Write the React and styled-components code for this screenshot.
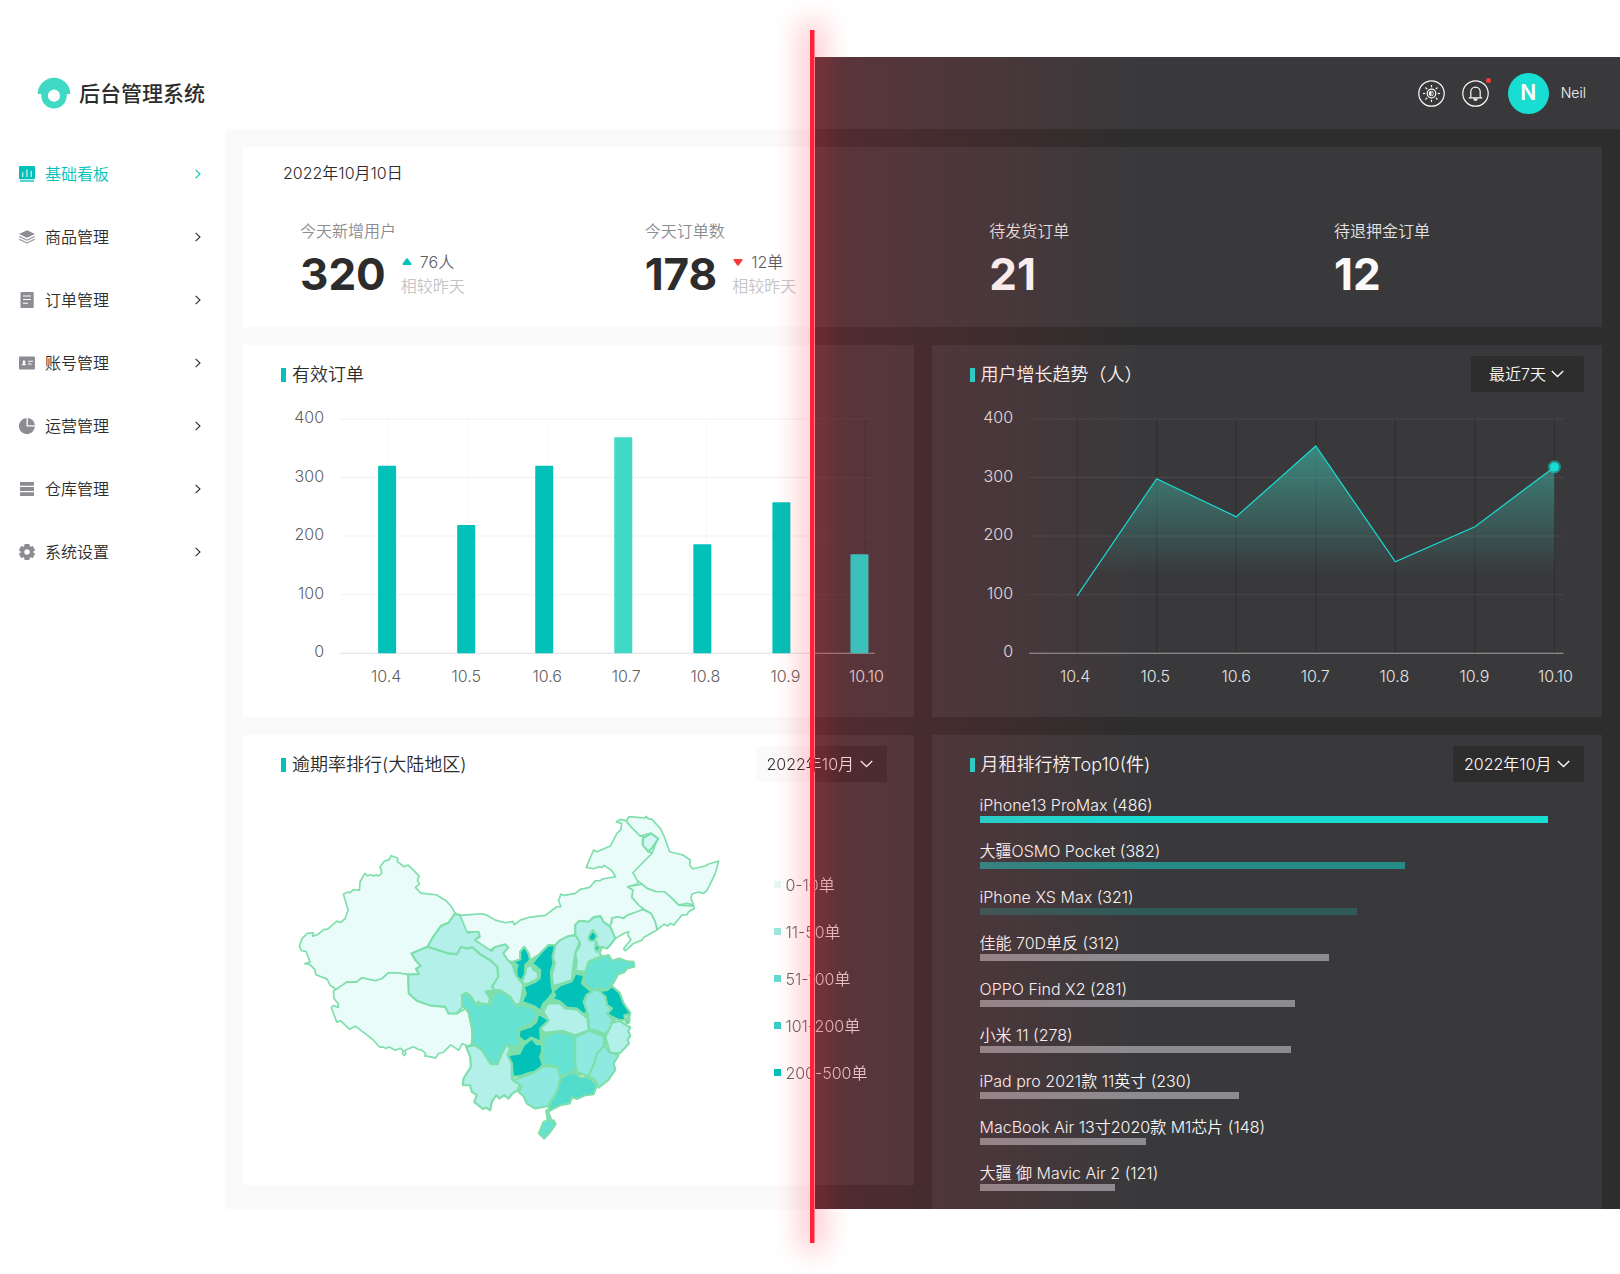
import React from "react";
import styled, { createGlobalStyle } from "styled-components";

/* ---------- theme ---------- */

const light = {
  surface: "#ffffff",
  page: "#fafafa",
  text: "#2c2c2c",
  soft: "#5f5f5f",
  label: "#8c8c90",
  faint: "#c4c4c8",
  accent: "#02c1b9",
};

const dark = {
  surface: "#39393b",
  page: "#2d2d2d",
  text: "#fafafa",
  soft: "#e4e4e4",
  label: "#e4e4e4",
  faint: "#8c8c90",
  accent: "#18ddd3",
};

const themes = { light, dark };

/* the light theme ends and the dark theme starts at this place of the window */
const SPLIT = "calc(50% + 5px)";

const splitFill = (key) =>
  `linear-gradient(to right, ${light[key]} ${SPLIT}, ${dark[key]} ${SPLIT}) fixed`;

const tint = (key) => ({ $tone }) =>
  $tone === "split"
    ? `color: transparent; background: ${splitFill(key)}; background-clip: text; -webkit-background-clip: text;`
    : `color: ${themes[$tone || "light"][key]};`;

const GlobalStyle = createGlobalStyle`
  *, *::before, *::after { box-sizing: border-box; }
  body {
    margin: 0;
    background: #ffffff;
    font-family: Inter, "Noto Sans CJK SC", sans-serif;
    font-size: 16px;
    font-weight: 350;
    line-height: 24px;
    color: ${light.text};
  }
  ul, h1, h2, p { margin: 0; padding: 0; list-style: none; font-weight: inherit; }
  button, select { font: inherit; border: 0; padding: 0; background: none; color: inherit; }
  a { color: inherit; text-decoration: none; }
`;

/* ---------- frame ---------- */

const Stage = styled.div`
  position: relative;
  padding: 57px 0 65px;
`;

const Shell = styled.div`
  position: relative;
`;

const RedTint = styled.div`
  position: absolute;
  top: 0;
  bottom: 0;
  left: ${SPLIT};
  width: 20%;
  background: linear-gradient(to right, rgba(255, 36, 56, 0.18), rgba(255, 36, 56, 0));
  pointer-events: none;
`;

const Divider = styled.div`
  position: absolute;
  top: 30px;
  bottom: 31px;
  left: 50%;
  width: 5px;
  border-right: 1px solid rgba(255, 36, 56, 0.5);
  background: #ff243a padding-box;
  box-shadow: 0 0 28px 8px rgba(255, 36, 56, 0.3);
  pointer-events: none;
`;

const Header = styled.header`
  display: flex;
  align-items: center;
  justify-content: space-between;
  height: 72px;
  padding: 0 34px 0 37px;
  background: ${splitFill("surface")};
`;

const Brand = styled.div`
  display: flex;
  align-items: center;
  gap: 8px;
`;

const BrandName = styled.h1`
  padding-top: 2px;
  font-size: 21px;
  font-weight: 500;
  line-height: 26px;
`;

const Tools = styled.div`
  display: flex;
  align-items: center;
  gap: 17px;
  color: ${dark.text};
`;

const ToolButton = styled.button`
  position: relative;
  display: flex;
  cursor: pointer;
`;

const Dot = styled.span`
  position: absolute;
  top: -2px;
  right: -2px;
  width: 5px;
  height: 5px;
  border-radius: 50%;
  background: #f93a37;
`;

const User = styled.a`
  display: flex;
  align-items: center;
  gap: 12px;
  margin-left: 2px;
  font-size: 14px;
`;

const Avatar = styled.span`
  display: grid;
  place-items: center;
  width: 41px;
  height: 41px;
  border-radius: 50%;
  background: ${dark.accent};
  color: #ffffff;
  font-size: 21px;
  font-weight: 600;
`;

const Columns = styled.div`
  display: grid;
  grid-template-columns: 225px minmax(0, 1fr);
`;

/* ---------- side menu ---------- */

const Menu = styled.nav`
  padding-top: 13px;
`;

const MenuLink = styled.a`
  display: flex;
  align-items: center;
  gap: 10px;
  height: 63px;
  padding: 0 24px 0 19px;
  color: ${({ $active }) => ($active ? light.accent : light.text)};

  svg:first-child { color: ${({ $active }) => ($active ? light.accent : "#8c8c92")}; }
  svg:last-child { margin-left: auto; }
`;

/* ---------- panels ---------- */

const Main = styled.main`
  display: grid;
  grid-template-columns: repeat(2, minmax(0, 1fr));
  gap: 18px;
  align-items: start;
  padding: 18px 18px 0;
  background: ${splitFill("page")};
`;

const Panel = styled.section`
  height: ${({ $height }) => $height}px;
  background: ${splitFill("surface")};
  grid-column: ${({ $wide }) => ($wide ? "1 / -1" : "auto")};
`;

const PanelHead = styled.div`
  display: flex;
  align-items: center;
  justify-content: space-between;
  height: 60px;
  padding: 0 ${({ $inset }) => $inset || 18}px 0 38px;
`;

const PanelTitle = styled.h2`
  display: flex;
  align-items: center;
  gap: 6px;
  font-size: 18px;
  color: ${({ $tone }) => themes[$tone].text};

  &::before {
    content: "";
    width: 5px;
    height: 14px;
    background: ${({ $tone }) => themes[$tone].accent};
  }
`;

const Picker = styled.label`
  display: grid;
  align-items: center;
  height: 36px;
  margin-bottom: 2px;
  border-radius: 2px;
  background: ${splitFill("page")};
  color: ${dark.text};

  > * { grid-area: 1 / 1; }
  > svg {
    justify-self: end;
    margin-right: ${({ $short }) => ($short ? 20 : 14)}px;
    pointer-events: none;
  }
`;

const PickerSelect = styled.select`
  appearance: none;
  width: ${({ $short }) => ($short ? 113 : 131)}px;
  height: 36px;
  padding: 0 24px 0 ${({ $short }) => ($short ? 18 : 11)}px;
  outline: 0;
  cursor: pointer;
  ${tint("text")}

  option { color: ${light.text}; background: ${light.surface}; }
`;

const ChartSvg = styled.svg`
  display: block;
  width: 100%;
  height: auto;
  font-size: 16px;
`;

/* ---------- statistics ---------- */

const Today = styled.p`
  padding: 14px 40px 0;
`;

const Stats = styled.ul`
  display: grid;
  grid-template-columns: repeat(3, 9fr) 7fr;
  padding: 34px 0 0 57px;
`;

const StatLabel = styled.p`
  ${tint("label")}
`;

const StatRow = styled.div`
  display: flex;
  align-items: center;
  gap: 15px;
  height: 62px;
`;

const StatValue = styled.strong`
  font-size: 44px;
  font-weight: 700;
  ${tint("text")}
`;

const Change = styled.p`
  display: flex;
  align-items: center;
  gap: 8px;
  color: ${light.soft};

  svg { margin-left: 1px; }
`;

const Compared = styled.p`
  color: ${light.faint};
`;

/* ---------- map ---------- */

const MapBody = styled.div`
  display: grid;
  grid-template-columns: 531fr 139fr;
`;

const Legend = styled.ul`
  padding-top: 66px;
`;

const LegendItem = styled.li`
  display: flex;
  align-items: center;
  gap: 4px;
  height: 47px;
`;

const Swatch = styled.span`
  width: 7px;
  height: 7px;
  background: ${({ $color }) => $color};
`;

const LegendText = styled.span`
  ${tint("soft")}
`;

/* ---------- ranking ---------- */

const Ranking = styled.ul`
  padding: 0 18px 0 48px;
  color: ${dark.text};
`;

const RankItem = styled.li`
  height: 46px;
  line-height: 21px;
`;

const RankBar = styled.div`
  height: 7px;
  background: ${({ $color }) => $color};
`;

/* ---------- icons ---------- */

const Logo = () => (
  <svg width="34" height="32" viewBox="0 0 34 32" aria-hidden="true">
    <path
      fill="#40d9c5"
      fillRule="evenodd"
      d="M.7 17a16.3 16.3 0 0 1 32.6 0h-3.6v1.8a12.7 12.7 0 0 1-25.4 0V17ZM17 12.6a6.1 6.1 0 1 0 0 12.2 6.1 6.1 0 0 0 0-12.2Z"
    />
  </svg>
);

const Chevron = () => (
  <svg width="6" height="10" viewBox="0 0 6 10" fill="none" stroke="currentColor" strokeWidth="1.1" aria-hidden="true">
    <path d="M.6.8 5 5 .6 9.2" />
  </svg>
);

const Down = () => (
  <svg width="13" height="8" viewBox="0 0 13 8" fill="none" stroke="currentColor" strokeWidth="1.4" aria-hidden="true">
    <path d="m.8 1 5.7 5.6L12.2 1" />
  </svg>
);

const menuShapes = {
  board: (
    <>
      <rect width="16" height="13.2" rx="1" />
      <path d="M1 14.3h14v1.4H1z" />
      <path fill="#fff" d="M3.3 6.3h1v4.6h-1zM7.4 3.6h1v7.3h-1zM11.7 5h1v5.9h-1z" />
    </>
  ),
  layers: (
    <>
      <path d="M8 1.2 16 5 8 8.8 0 5Z" />
      <path fill="none" stroke="currentColor" strokeWidth="1.1" d="m.3 7.6 7.7 3.6 7.7-3.6M.3 10.2 8 13.9l7.7-3.7" />
    </>
  ),
  doc: (
    <>
      <rect x="1.5" width="13.2" height="16" rx="1" />
      <path fill="#fff" d="M4 3.6h8v1H4zM4 7h8v1H4zM4 10.7h5v1H4z" />
    </>
  ),
  card: (
    <>
      <rect y="1.5" width="16" height="13" rx="1" />
      <path fill="#fff" d="M9.3 5.7h4.6v1H9.3zM9 8.5h3.6v1H9zM2.9 10.3c0-1 .7-1.6 1.3-1.7-.8-.8-.8-3.3.8-3.3s1.6 2.5.8 3.3c.6.1 1.3.7 1.3 1.7Z" />
    </>
  ),
  pie: (
    <>
      <path d="M7.5.1A8 8 0 1 0 15.9 8.5H7.5Z" />
      <path d="M8.8 0A8 8 0 0 1 16 7.2H8.8Z" />
    </>
  ),
  rows: <path d="M1 1h14v3.7H1zM1 6h14v4H1zM1 11.2h14v3.7H1z" />,
  gear: (
    <>
      {[0, 60, 120].map((a) => (
        <rect key={a} x="5.3" y="0" width="5.4" height="16" rx="1" transform={`rotate(${a} 8 8)`} />
      ))}
      <circle cx="8" cy="8" r="6.4" />
      <circle cx="8" cy="8" r="2.7" fill="#fff" />
    </>
  ),
};

const MenuIcon = ({ name }) => (
  <svg width="16" height="16" viewBox="0 0 16 16" fill="currentColor" aria-hidden="true">
    {menuShapes[name]}
  </svg>
);

const SunIcon = () => (
  <svg width="27" height="27" viewBox="0 0 27 27" fill="none" stroke="currentColor" strokeWidth="1.2" aria-hidden="true">
    <circle cx="13.5" cy="13.5" r="12.7" />
    <circle cx="13.5" cy="13.5" r="4.3" />
    <path fill="currentColor" stroke="none" d="M13.5 10.8a2.7 2.7 0 0 0 0 5.4Z" />
    <path d="M14 11c1.7.6 1.7 4.4 0 5" strokeWidth=".8" />
    {[0, 45, 90, 135, 180, 225, 270, 315].map((a) => (
      <path key={a} d="M13.5 5v2.3" transform={`rotate(${a} 13.5 13.5)`} />
    ))}
  </svg>
);

const BellIcon = () => (
  <svg width="27" height="27" viewBox="0 0 27 27" fill="none" stroke="currentColor" strokeWidth="1.2" aria-hidden="true">
    <circle cx="13.5" cy="13.5" r="12.7" />
    <path d="M6.7 17.8h13.6M8.8 17.8v-6a4.7 4.7 0 0 1 9.4 0v6" />
    <path fill="currentColor" stroke="none" d="M11.2 18.6h4.6a2.3 2.3 0 0 1-4.6 0Z" />
  </svg>
);

const Arrow = ({ up }) => (
  <svg width="10" height="8" viewBox="0 0 10 8" aria-hidden="true">
    {up ? (
      <path fill="#02c1b9" d="M4.3.6a1 1 0 0 1 1.4 0L9.3 5.5q.5 1.5-.6 1.5H1.3Q.2 7 .7 5.5Z" />
    ) : (
      <path fill="#f93a37" d="M4.3 7.4a1 1 0 0 0 1.4 0L9.3 2.5Q9.8 1 8.7 1H1.3Q.2 1 .7 2.5Z" />
    )}
  </svg>
);

/* ---------- data ---------- */

const menu = [
  ["board", "基础看板"],
  ["layers", "商品管理"],
  ["doc", "订单管理"],
  ["card", "账号管理"],
  ["pie", "运营管理"],
  ["rows", "仓库管理"],
  ["gear", "系统设置"],
];

const stats = [
  { label: "今天新增用户", value: 320, change: "76人", up: true, tone: "light" },
  { label: "今天订单数", value: 178, change: "12单", up: false, tone: "light" },
  { label: "待发货订单", value: 21, tone: "dark" },
  { label: "待退押金订单", value: 12, tone: "dark" },
];

const days = ["10.4", "10.5", "10.6", "10.7", "10.8", "10.9", "10.10"];
const dayX = [143, 223, 304, 383, 462, 542, 623];
const orders = [320, 219, 320, 369, 186, 258, 169];
const growth = [98, 298, 233, 354, 156, 216, 318];

const legend = [
  ["#e4f9f7", "0-10单"],
  ["#9ae8e0", "11-50单"],
  ["#63dcd2", "51-100单"],
  ["#33cec6", "101-200单"],
  ["#02c1b9", "200-500单"],
];

const ranking = [
  ["iPhone13 ProMax (486)", 94, "#18ddd3"],
  ["大疆OSMO Pocket (382)", 70.4, "#268a86"],
  ["iPhone XS Max (321)", 62.4, "#305a5a"],
  ["佳能 70D单反 (312)", 57.8, "#8c8c90"],
  ["OPPO Find X2 (281)", 52.2, "#8c8c90"],
  ["小米 11 (278)", 51.5, "#8c8c90"],
  ["iPad pro 2021款 11英寸 (230)", 42.9, "#8c8c90"],
  ["MacBook Air 13寸2020款 M1芯片 (148)", 27.6, "#8c8c90"],
  ["大疆 御 Mavic Air 2 (121)", 22.4, "#8c8c90"],
];

const c0 = "#eafcfa";
const c1 = "#b3f0e9";
const c2 = "#8eeae0";
const c3 = "#66e2d2";
const c4 = "#52dccc";
const c5 = "#02c1b9";
const border = "#7edfab";

const west = [
  [c0, "M483 377L503 384 501 394 522 410 534 405 550 420 567 438 562 450 568 462 556 472 572 489 618 494 648 512 664 530 675 550 655 578 648 582 632 588 608 622 592 650 544 670 556 690 572 708 558 716 566 732 534 733 500 728 475 728 455 746 436 752 418 748 395 743 380 756 350 756 330 772 318 778 300 765 291 747 258 734 254 718 240 704 224 701 240 696 228 664 214 662 208 648 216 625 232 610 250 608 248 618 262 614 282 598 292 598 320 573 332 577 345 566 354 540 340 492 354 486 360 488 370 479 388 480 390 455 404 430 412 437 422 434 430 438 438 434 446 438 455 428 450 410 462 394 478 388Z"],
  [c0, "M318 778L350 756 380 756 395 743 418 748 436 752 455 746 475 728 500 728 534 733 536 790 560 812 600 826 645 830 655 850 680 850 706 836 716 850 724 890 728 940 712 948 696 940 686 960 662 944 640 966 625 970 617 983 584 977 587 970 575 960 565 958 550 950 525 960 527 970 522 976 517 970 520 962 510 954 496 960 484 954 476 950 468 955 458 950 450 952 444 946 430 930 415 918 376 888 358 897 332 872 320 876 304 832 310 826 325 832 324 820 312 806 310 782Z"],
  [c1, "M544 670L592 650 610 655 655 670 680 672 692 650 710 655 728 652 750 672 780 690 802 710 804 740 786 770 794 780 766 784 780 805 775 822 760 828 745 815 738 825 722 798 708 788 698 795 697 830 680 850 655 850 645 830 600 826 560 812 536 790 534 733 566 732 558 716 572 708 556 690Z"],
  [c1, "M675 550L692 556 704 585 714 608 745 602 750 616 735 630 760 645 784 662 795 650 825 642 835 652 820 670 835 692 848 705 855 730 872 755 880 760 875 795 870 820 855 825 840 800 810 780 794 780 786 770 804 740 802 710 780 690 750 672 728 652 710 655 692 650 680 672 655 670 610 655 592 650 608 622 632 588 655 578Z"],
];

const east = [
  [c0, "M0 376L65 371 82 376 105 390 135 398 158 394 162 404 180 390 205 382 255 376 290 350 302 350 295 332 302 312 312 316 345 310 360 298 388 292 405 272 418 272 430 266 466 260 455 242 432 226 425 232 416 230 400 236 378 232 400 180 410 185 450 168 470 130 482 118 484 100 468 96 480 88 498 92 510 108 540 138 550 140 546 160 562 184 580 190 565 212 518 248 540 265 530 282 502 290 518 300 515 322 540 345 548 358 520 370 500 376 490 385 472 380 455 385 450 410 430 395 420 378 400 382 385 395 358 392 345 405 345 435 325 438 300 455 285 465 265 465 240 490 210 510 205 490 192 470 180 485 180 508 158 515 145 512 130 490 145 472 135 462 105 470 90 480 45 450 60 440 55 425 20 425Z"],
  [c0, "M498 92L506 80 555 84 557 79 564 86 575 88 600 115 612 140 628 185 668 195 690 210 688 225 697 236 735 228 745 222 775 213 765 250 748 285 740 300 730 310 715 306 695 312 692 325 700 345 680 340 655 345 635 325 612 305 588 305 560 295 545 282 530 270 518 248 550 215 575 190 592 145 570 130 540 138 510 108Z"],
  ["#d5f6f2", "M548 145L572 130 594 146 574 176 564 184 548 166Z"],
  [c0, "M545 282L560 295 588 305 612 305 635 325 655 345 700 348 702 355 685 365 680 374 665 375 640 405 630 400 622 408 612 402 592 418 580 385 572 370 548 355 535 345 515 322 518 300 502 290Z"],
  [c0, "M548 358L572 370 585 395 590 420 550 442 545 450 520 460 495 482 490 476 512 448 503 436 505 425 490 430 462 447 445 415 455 395 455 385 472 380 490 385 500 376Z"],
  [c1, "M345 405L358 392 385 395 400 382 420 378 430 395 450 410 465 445 450 465 440 475 425 470 418 490 425 498 385 515 375 545 345 542 350 515 345 490 360 465 345 435Z"],
  [c5, "M385 440L398 420 410 438 402 452 388 452Z"],
  [c5, "M408 455L412 468 420 472 410 485 404 475Z"],
  [c1, "M285 465L300 450 325 438 345 435 358 455 345 490 340 520 335 570 300 582 278 588 275 550 284 520 277 500Z"],
  [c5, "M285 465L277 500 280 520 272 545 275 590 280 605 265 625 250 640 240 662 225 650 185 635 197 610 190 590 225 575 238 565 240 540 215 520 240 490 265 465Z"],
  [c5, "M192 470L205 490 210 510 195 525 195 550 185 572 170 560 168 540 172 525 158 515 180 508 180 485Z"],
  [c1, "M195 550L198 530 215 525 218 538 232 545 234 565 205 580 188 582 186 572Z"],
  [c5, "M278 605L300 585 335 573 345 550 372 555 365 580 395 605 378 618 370 635 385 665 370 672 350 655 320 652 300 635 275 625 285 615Z"],
  [c3, "M375 550L385 515 425 500 445 495 455 512 478 505 500 514 520 515 522 530 500 535 492 546 474 552 455 585 440 598 420 595 395 598 370 582Z"],
  [c5, "M415 602L440 600 455 588 478 608 490 640 510 668 505 690 478 690 455 680 440 670 455 655 440 645 435 620Z"],
  [c1, "M492 676L502 672 505 684 495 686Z"],
  [c5, "M495 690L508 688 506 698 498 698Z"],
  [c2, "M395 598L415 602 435 620 440 645 455 655 440 670 455 685 452 710 435 732 410 722 388 718 382 670 372 640 378 615 395 605Z"],
  [c1, "M455 698L478 692 490 700 510 712 504 722 510 738 502 748 506 760 480 788 450 790 435 740 450 712Z"],
  [c1, "M250 665L262 640 300 640 315 655 350 658 382 685 385 720 345 735 305 722 255 728 240 715 265 692Z"],
  [c3, "M5 615L18 608 35 625 48 645 70 640 90 645 98 620 118 602 150 620 165 645 200 648 225 658 230 680 210 705 175 715 175 745 180 765 150 770 140 762 125 790 112 822 92 822 65 780 45 765 35 760 38 720 30 690 24 660 8 650Z"],
  [c5, "M235 670L265 690 240 715 242 755 212 742 195 755 175 740 178 720 210 710 228 695Z"],
  [c5, "M215 745L230 762 245 762 245 785 240 800 248 825 225 845 208 848 180 858 158 860 155 820 142 795 178 790 190 765Z"],
  [c1, "M18 770L45 765 65 780 92 822 112 822 125 790 140 762 150 775 142 795 155 820 155 865 180 880 172 900 155 912 145 925 132 915 118 925 108 915 95 935 90 960 78 952 68 956 42 935 50 915 35 905 30 885 8 885 10 865 32 830 30 800Z"],
  [c3, "M250 740L290 725 340 735 345 765 348 830 330 850 300 860 290 828 250 825 248 790Z"],
  [c2, "M345 740L388 722 430 738 432 765 410 790 402 820 385 858 350 845 345 820Z"],
  [c2, "M435 765L445 785 475 795 460 820 465 838 445 868 415 892 405 870 385 858 402 820 410 790Z"],
  [c2, "M158 870L215 850 250 828 290 830 302 862 290 905 262 948 225 955 200 940 190 918 175 905 185 888Z"],
  [c4, "M302 862L325 852 345 848 360 862 385 860 410 885 400 912 372 916 352 926 335 922 328 940 300 945 262 965 270 940 290 905Z"],
  [c3, "M258 960L264 966 272 985 262 986Z"],
  [c3, "M250 995L262 990 280 990 286 1002 270 1025 252 1045 236 1030Z"],
];

/* ---------- charts ---------- */

const ROW = 58.5;
const BASE = 248;
const lineX = (i) => 145 + i * 79.5;
const valueY = (v) => BASE - (v * ROW) / 100;

const Axes = ({ left }) => {
  const tone = left ? light : dark;
  return (
    <>
      {days.map((d, i) => (
        <path
          key={d}
          d={`M${lineX(i)} 14V${BASE}`}
          stroke={left && i < 6 ? light.page : dark.page}
          strokeWidth="1"
        />
      ))}
      {[400, 300, 200, 100, 0].map((v) => (
        <React.Fragment key={v}>
          {v > 0 && (
            <path
              d={`M97 ${valueY(v)}H631`}
              stroke={left ? "rgba(128,128,128,.12)" : "rgba(255,255,255,.08)"}
              strokeWidth="1"
            />
          )}
          <text x="81" y={valueY(v) + 4} textAnchor="end" fill={tone.soft}>
            {v}
          </text>
        </React.Fragment>
      ))}
      <path d={`M97 ${BASE}H${left ? 572 : 631}`} stroke={left ? "#dedede" : "#a0a0a2"} />
      {left && <path d={`M572 ${BASE}H631`} stroke="#a0a0a2" />}
      {days.map((d, i) => (
        <text key={d} x={dayX[i]} y="277" textAnchor="middle" fill={left && i < 6 ? light.soft : dark.soft}>
          {d}
        </text>
      ))}
    </>
  );
};

const OrdersChart = () => (
  <ChartSvg viewBox="0 0 670 312" role="img" aria-label="有效订单">
    <Axes left />
    {orders.map((v, i) => (
      <rect
        key={days[i]}
        x={135 + Math.round(i * 78.7)}
        y={valueY(v)}
        width="18"
        height={BASE - valueY(v)}
        rx="1"
        fill={i === 6 ? dark.accent : i === 3 ? "#40d9c5" : light.accent}
      />
    ))}
  </ChartSvg>
);

const GrowthChart = () => {
  const points = growth.map((v, i) => `${lineX(i)} ${valueY(v)}`).join("L");
  return (
    <ChartSvg viewBox="0 0 670 312" role="img" aria-label="用户增长趋势">
      <defs>
        <linearGradient id="area" gradientUnits="userSpaceOnUse" x1="0" y1="40" x2="0" y2="170">
          <stop offset="0" stopColor="#40d9c5" stopOpacity=".5" />
          <stop offset="1" stopColor="#40d9c5" stopOpacity="0" />
        </linearGradient>
      </defs>
      <Axes />
      <path d={`M${points}V${BASE}H${lineX(0)}Z`} fill="url(#area)" />
      <path d={`M${points}`} fill="none" stroke={dark.accent} strokeWidth="1.2" />
      <circle cx={lineX(6)} cy={valueY(318)} r="6.5" fill={dark.accent} opacity=".5" />
      <circle cx={lineX(6)} cy={valueY(318)} r="4.5" fill={dark.accent} />
    </ChartSvg>
  );
};

const Province = ({ fill, d }) => <path fill={fill} d={d} strokeWidth={fill === c0 ? 5 : 6.5} />;

const ChinaMap = () => (
  <ChartSvg viewBox="39 195 1593 1170" role="img" aria-label="大陆地区">
    <g stroke={border} strokeLinejoin="round">
      <path
        fill={border}
        transform="translate(690 180)"
        d="M20 610L60 560 100 500 190 490 340 480 380 560 440 610 470 680 440 760 390 850 300 870 200 850 130 800 40 740Z"
      />
      {west.map(([fill, d]) => (
        <Province key={d} fill={fill} d={d} />
      ))}
      <g transform="translate(690 180)">
        {east.map(([fill, d]) => (
          <Province key={d} fill={fill} d={d} />
        ))}
      </g>
    </g>
  </ChartSvg>
);

const PeriodPicker = ({ label, value, short, tone }) => (
  <Picker $short={short}>
    <PickerSelect aria-label={label} defaultValue={value} $short={short} $tone={tone}>
      <option>{value}</option>
    </PickerSelect>
    <Down />
  </Picker>
);

/* ---------- page ---------- */

export default function App() {
  return (
    <Stage>
      <GlobalStyle />
      <Shell>
        <Header>
          <Brand>
            <Logo />
            <BrandName>后台管理系统</BrandName>
          </Brand>
          <Tools>
            <ToolButton type="button" aria-label="主题">
              <SunIcon />
            </ToolButton>
            <ToolButton type="button" aria-label="通知">
              <BellIcon />
              <Dot />
            </ToolButton>
            <User href="#user">
              <Avatar>N</Avatar>
              Neil
            </User>
          </Tools>
        </Header>

        <Columns>
          <Menu>
            {menu.map(([icon, label], i) => (
              <MenuLink key={icon} href={`#${icon}`} $active={i === 0}>
                <MenuIcon name={icon} />
                {label}
                <Chevron />
              </MenuLink>
            ))}
          </Menu>

          <Main>
            <Panel $wide $height={180}>
              <Today>2022年10月10日</Today>
              <Stats>
                {stats.map((s) => (
                  <li key={s.label}>
                    <StatLabel $tone={s.tone}>{s.label}</StatLabel>
                    <StatRow>
                      <StatValue $tone={s.tone}>{s.value}</StatValue>
                      {s.change && (
                        <div>
                          <Change>
                            <Arrow up={s.up} />
                            {s.change}
                          </Change>
                          <Compared>相较昨天</Compared>
                        </div>
                      )}
                    </StatRow>
                  </li>
                ))}
              </Stats>
            </Panel>

            <Panel $height={372}>
              <PanelHead>
                <PanelTitle $tone="light">有效订单</PanelTitle>
              </PanelHead>
              <OrdersChart />
            </Panel>

            <Panel $height={372}>
              <PanelHead>
                <PanelTitle $tone="dark">用户增长趋势（人）</PanelTitle>
                <PeriodPicker label="时间范围" value="最近7天" short tone="dark" />
              </PanelHead>
              <GrowthChart />
            </Panel>

            <Panel $height={450}>
              <PanelHead $inset={27}>
                <PanelTitle $tone="light">逾期率排行(大陆地区)</PanelTitle>
                <PeriodPicker label="逾期率月份" value="2022年10月" tone="split" />
              </PanelHead>
              <MapBody>
                <ChinaMap />
                <Legend>
                  {legend.map(([color, text]) => (
                    <LegendItem key={text}>
                      <Swatch $color={color} />
                      <LegendText $tone="split">{text}</LegendText>
                    </LegendItem>
                  ))}
                </Legend>
              </MapBody>
            </Panel>

            <Panel $height={474}>
              <PanelHead>
                <PanelTitle $tone="dark">月租排行榜Top10(件)</PanelTitle>
                <PeriodPicker label="月租月份" value="2022年10月" tone="dark" />
              </PanelHead>
              <Ranking>
                {ranking.map(([name, percent, color]) => (
                  <RankItem key={name}>
                    {name}
                    <RankBar $color={color} style={{ width: `${percent}%` }} />
                  </RankItem>
                ))}
              </Ranking>
            </Panel>
          </Main>
        </Columns>
        <RedTint />
      </Shell>
      <Divider />
    </Stage>
  );
}
